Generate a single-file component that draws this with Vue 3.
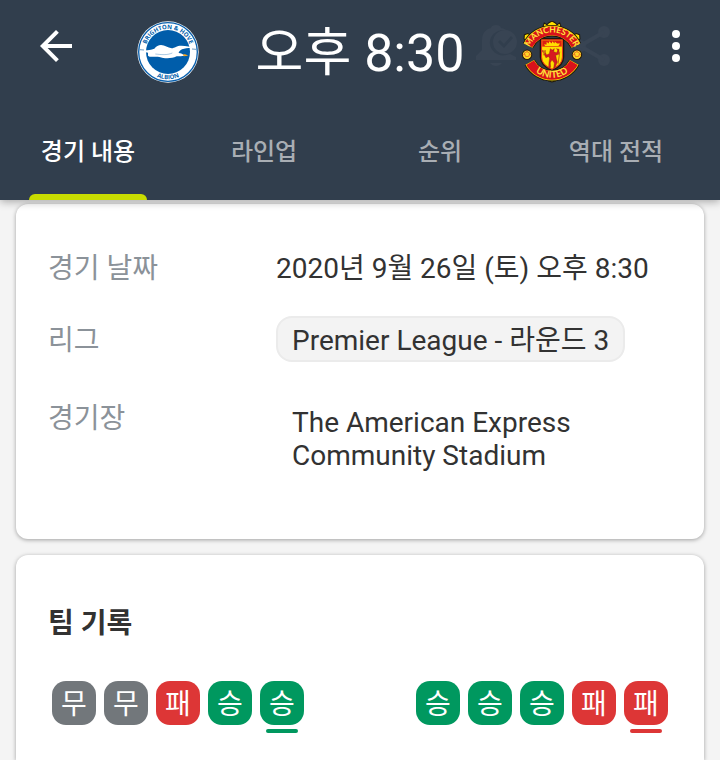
<script setup>
import { ref } from 'vue';

const tabs = ['경기 내용', '라인업', '순위', '역대 전적'];
const activeTab = ref(0);

const labels = { W: '승', D: '무', L: '패' };

const teams = [
  { name: 'Brighton & Hove Albion', form: ['D', 'D', 'L', 'W', 'W'] },
  { name: 'Manchester United', form: ['W', 'W', 'W', 'L', 'L'] },
];
</script>

<template>
  <div class="page">
    <header class="header">
      <div class="toolbar">
        <button type="button" class="icon-button" aria-label="뒤로">
          <svg width="48" height="48" viewBox="0 0 24 24" fill="#fff">
            <path d="M20 11H7.83l5.59-5.59L12 4l-8 8 8 8 1.41-1.41L7.83 13H20v-2z" />
          </svg>
        </button>

        <div class="actions">
          <button type="button" class="icon-button alert-button" aria-label="알림">
            <svg width="48" height="48" viewBox="0 0 48 48">
              <path
                fill="#384453"
                d="M4 38v-4l6-6V18C10 11 14 7 19 6c0-4 10-4 10 0 2 0 4 1 5 2-10-1-17 6-16 14 1 8 9 13 16 11l4-1 6 3v3zM18 41h12c-3 4-9 4-12 0z"
              />
              <path
                fill="#384453"
                fill-rule="evenodd"
                d="M33 8a12 12 0 1 0 0 24a12 12 0 0 0 0-24zM26 20l2-2 4 4 7-8 2 2-9 10z"
              />
            </svg>
          </button>
          <button type="button" class="icon-button" aria-label="공유">
            <svg width="48" height="48" viewBox="0 0 48 48">
              <g fill="#384453">
                <circle cx="36" cy="10" r="6" />
                <circle cx="12" cy="24" r="6" />
                <circle cx="36" cy="38" r="6" />
              </g>
              <path d="M36 10 12 24l24 14" fill="none" stroke="#384453" stroke-width="4" />
            </svg>
          </button>
          <button type="button" class="icon-button" aria-label="더보기">
            <svg width="48" height="48" viewBox="0 0 24 24" fill="#fff">
              <circle cx="12" cy="6" r="2" />
              <circle cx="12" cy="12" r="2" />
              <circle cx="12" cy="18" r="2" />
            </svg>
          </button>
        </div>

        <div class="match">
          <svg class="crest" viewBox="0 0 186 186" role="img" :aria-label="teams[0].name">
            <defs>
              <path id="bha-top" d="M24 93a69 69 0 0 1 138 0" />
              <path id="bha-bottom" d="M11 93a82 82 0 0 0 164 0" />
            </defs>
            <circle cx="93" cy="93" r="92" fill="#fff" />
            <circle cx="93" cy="93" r="88" fill="none" stroke="#0a60ad" stroke-width="4" />
            <circle cx="93" cy="93" r="66" fill="#005daa" />
            <g class="bha-text">
              <text><textPath href="#bha-top" startOffset="50%">BRIGHTON &amp; HOVE</textPath></text>
              <text><textPath href="#bha-bottom" startOffset="50%">ALBION</textPath></text>
            </g>
            <path
              fill="#fff"
              d="M8 89c16-1 31-1 44-6 6-7 12-11 20-11 12 0 20 8 32 10 9-1 15-8 29-8 15 0 26 4 44 7-18 0-31-1-42 4-7 4-10 9-10 11 7 0 13 4 18 8-8 2-16 1-24 2-17 8-37 7-52 2-13-2-30 2-34-4v-9c-10-2-18-4-25-6z"
            />
            <path d="M55 99c18 2 35 4 51-3" fill="none" stroke="#005daa" stroke-width="1" />
            <path d="M138 100c6-1 11 1 15 4l-13 2z" fill="#f5a51d" />
            <path d="M8 86l13 1M165 84l12 1" stroke="#6e9cc4" stroke-width="3" />
          </svg>

          <h1 class="kickoff">오후 8:30</h1>

          <svg class="crest" viewBox="-2 -3 184 184" role="img" :aria-label="teams[1].name">
            <defs>
              <path id="mu-top" d="M20 81A74 74 0 0 1 160 81" />
              <path id="mu-bottom" d="M21 126A80 80 0 0 0 159 126" />
            </defs>
            <g fill="#ffdf00" stroke="#1d160c" stroke-width="3">
              <path d="M8 38l10-4 7 4-4 9-9 8-5-5zM172 38l-10-4-7 4 4 9 9 8 5-5z" />
              <path d="M63 14l4-11 8 5 6-6 9-5 9 5 6 6 8-5 4 11z" />
              <path d="M55 164l9 8 9-4 7 7 10 3 10-3 7-7 9 4 9-8z" />
            </g>
            <path d="M90 32l52 28 9 35-12 38-49 20-49-20-12-38 9-35z" fill="#303b48" />
            <path d="M56 50h68v54c0 20-14 31-34 40-20-9-34-20-34-40z" fill="#ffdf00" stroke="#1d160c" stroke-width="5" />
            <path d="M59 53h62v51c0 18-12 28-31 36-19-8-31-18-31-36z" fill="none" stroke="#e5351b" stroke-width="3" />
            <path d="M61 55h58v18H61z" fill="#dc1f13" />
            <path d="M66 67h8v-8l7 5v-7l9 7v-7l8 7v-6l7 6h9l-5 7H70z" fill="#ffdf00" />
            <path
              fill="#d71920"
              stroke="#7f1412"
              stroke-width="1"
              d="M85 79l6 4 6-4-2 9 9 3 3-8-4-4 8 2-1 15-9 3 2 10 3 10-6 14-5 4 2-15-7-10-5 9 1 13-6 5 1-19 2-12-3-6-8 4-5-10 3-6 4 8 8-4z"
            />
            <path d="M66 83v16M62 83v6h8v-6M113 88l-5 36" fill="none" stroke="#ae241a" stroke-width="2" />

            <g fill="none">
              <path d="M19 70A79 79 0 0 1 161 70" stroke="#1d160c" stroke-width="34" />
              <path d="M19 70A79 79 0 0 1 161 70" stroke="#ffdf00" stroke-width="29" />
              <path d="M20 69A79 79 0 0 1 160 69" stroke="#d8121b" stroke-width="26" />
              <path d="M24 120A75 75 0 0 0 156 120" stroke="#1d160c" stroke-width="34" />
              <path d="M24 120A75 75 0 0 0 156 120" stroke="#ffdf00" stroke-width="29" />
              <path d="M25 121A75 75 0 0 0 155 121" stroke="#d8121b" stroke-width="26" />
            </g>
            <g fill="#ffd928" stroke="#251a0c" stroke-width="3">
              <circle cx="16" cy="97" r="14" />
              <circle cx="164" cy="97" r="14" />
            </g>
            <path
              d="M8 92l8-4 8 5-3 9-9 1zM3 97h6M23 97h5M16 83v5M156 92l8-4 8 5-3 9-9 1zM151 97h6M171 97h5M164 83v5"
              fill="none"
              stroke="#e24a20"
              stroke-width="2"
            />
            <g class="mu-text">
              <text><textPath href="#mu-top" startOffset="50%">MANCHESTER</textPath></text>
              <text class="mu-wide"><textPath href="#mu-bottom" startOffset="50%">UNITED</textPath></text>
            </g>
          </svg>
        </div>
      </div>

      <nav class="tabs" role="tablist">
        <button
          v-for="(tab, index) in tabs"
          :key="tab"
          type="button"
          role="tab"
          class="tab"
          :class="{ active: index === activeTab }"
          :aria-selected="index === activeTab"
          @click="activeTab = index"
        >
          {{ tab }}
        </button>
      </nav>
    </header>

    <main class="content">
      <section class="card">
        <dl class="details">
          <div class="row">
            <dt>경기 날짜</dt>
            <dd>2020년 9월 26일 (토) 오후 8:30</dd>
          </div>
          <div class="row league">
            <dt>리그</dt>
            <dd><button type="button" class="league-button">Premier League - 라운드 3</button></dd>
          </div>
          <div class="row venue">
            <dt>경기장</dt>
            <dd>The American Express Community Stadium</dd>
          </div>
        </dl>
      </section>

      <section class="card record">
        <h2 class="card-title">팀 기록</h2>
        <div class="forms">
          <ul v-for="team in teams" :key="team.name" class="form" :aria-label="team.name">
            <li
              v-for="(result, index) in team.form"
              :key="index"
              class="result"
              :class="[`result-${result}`, { latest: index === team.form.length - 1 }]"
            >
              <span class="badge">{{ labels[result] }}</span>
            </li>
          </ul>
        </div>
      </section>
    </main>
  </div>
</template>

<style>
body {
  margin: 0;
  background: #f4f4f4;
}
</style>

<style scoped>
.page {
  display: flex;
  flex-direction: column;
  min-height: 100vh;
  font-family: Roboto, 'Noto Sans CJK KR', sans-serif;
  font-size: 28px;
  line-height: 36px;
  color: #323232;
}

button {
  padding: 0;
  border: 0;
  background: none;
  font: inherit;
  color: inherit;
  cursor: pointer;
}

.header {
  position: relative;
  z-index: 1;
  background: #313e4d;
  box-shadow: 0 2px 8px rgba(0, 0, 0, 0.3);
}

.toolbar {
  position: relative;
  display: flex;
  align-items: center;
  justify-content: space-between;
  height: 92px;
  padding: 0 20px 12px 32px;
}

.icon-button {
  display: flex;
}

.actions {
  display: flex;
  gap: 36px;
}

.alert-button {
  margin-right: 12px;
}

.match {
  position: absolute;
  inset: 0;
  display: flex;
  align-items: center;
  justify-content: center;
  gap: 57px;
  pointer-events: none;
}

.crest {
  flex: none;
  width: 62px;
  height: 62px;
}

.bha-text {
  font-family: 'Open Sans', sans-serif;
  font-size: 18px;
  font-weight: 700;
  fill: #005daa;
  text-anchor: middle;
}

.mu-text {
  font-family: Lato, sans-serif;
  font-size: 25px;
  font-weight: 700;
  fill: #ffe53b;
  text-anchor: middle;
}

.mu-wide {
  font-size: 28px;
}

.kickoff {
  margin: 0;
  padding-top: 4px;
  font-size: 52px;
  font-weight: 400;
  line-height: 64px;
  color: #fff;
  white-space: nowrap;
}

.tabs {
  display: grid;
  grid-template-columns: repeat(4, 1fr);
  padding-right: 16px;
}

.tab {
  position: relative;
  height: 96px;
  font-size: 24px;
  font-weight: 500;
  color: #a9aeb4;
}

.tab.active {
  color: #fff;
}

.tab.active::after {
  content: '';
  position: absolute;
  right: 29px;
  bottom: 0;
  left: 29px;
  height: 6px;
  border-radius: 6px 6px 0 0;
  background: #c8dc00;
}

.content {
  flex: 1;
  display: flex;
  flex-direction: column;
  gap: 16px;
  padding: 4px 16px 0;
}

.card {
  border-radius: 12px;
  background: #fff;
  box-shadow: 0 1px 4px rgba(0, 0, 0, 0.35);
}

.details {
  display: flex;
  flex-direction: column;
  gap: 29px;
  margin: 0;
  padding: 47px 32px 53px;
}

.row {
  display: grid;
  grid-template-columns: 228px 1fr;
}

dt {
  color: #8b9299;
}

dd {
  margin: 0;
}

.league {
  align-items: center;
}

.league dt {
  padding-top: 4px;
}

.league-button {
  display: block;
  padding: 5px 14px 1px;
  border: 2px solid #ebebeb;
  border-radius: 16px;
  background: #f3f3f3;
}

.venue dt {
  padding-top: 10px;
}

.venue dd {
  max-width: 320px;
  padding: 15px 16px 14px;
  line-height: 33px;
}

.record {
  flex: 1;
  padding: 50px 32px 27px;
  border-radius: 12px 12px 0 0;
}

.card-title {
  margin: 0;
  font-size: 28px;
  font-weight: 700;
  line-height: 38px;
}

.forms {
  display: flex;
  justify-content: space-between;
  margin-top: 38px;
  padding: 0 4px;
}

.form {
  display: flex;
  gap: 8px;
  margin: 0;
  padding: 0;
  list-style: none;
}

.badge {
  display: block;
  width: 44px;
  padding-top: 4px;
  border-radius: 14px;
  line-height: 40px;
  text-align: center;
  color: #fff;
  background: var(--result-color);
}

.result-W {
  --result-color: #00985f;
}

.result-D {
  --result-color: #72777b;
}

.result-L {
  --result-color: #dd3636;
}

.latest::after {
  content: '';
  display: block;
  height: 4px;
  margin: 4px 6px 0;
  border-radius: 2px;
  background: var(--result-color);
}
</style>
